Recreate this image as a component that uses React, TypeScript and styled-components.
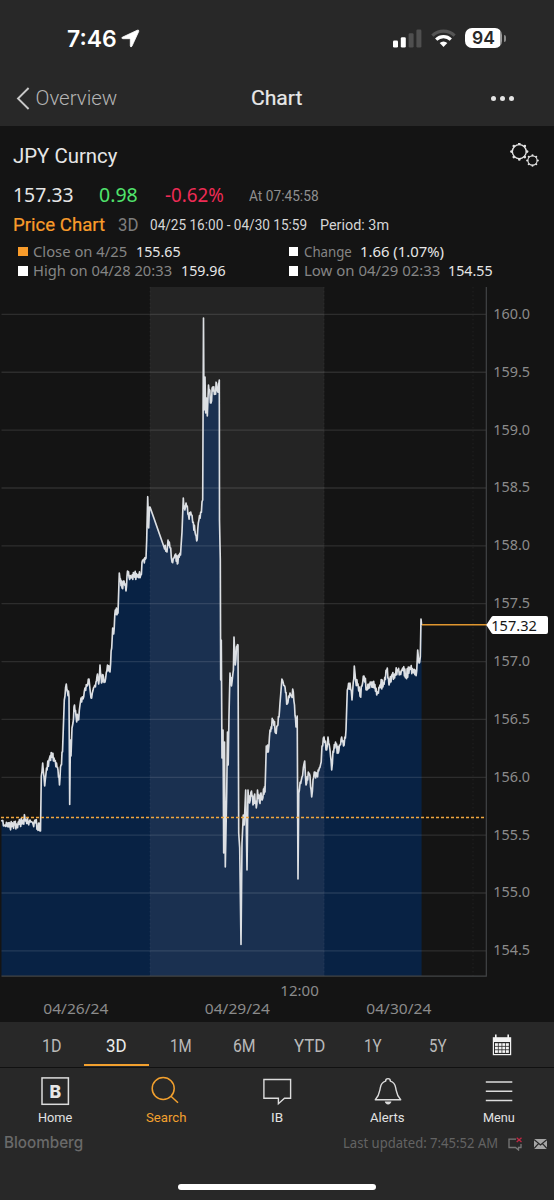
import React, { useLayoutEffect, useRef, useState } from "react";
import styled, { createGlobalStyle } from "styled-components";

const GlobalStyle = createGlobalStyle`
  * { box-sizing: border-box; }
  body { margin: 0; background: #282828; }
`;

const DIN = `Roboto, "Liberation Sans", sans-serif`;
const MONO = `"Noto Sans", "Open Sans", sans-serif`;
const UI = `Inter, "Liberation Sans", sans-serif`;

/* ---------- text that is condensed to a given width ---------- */

const FitBox = styled.span<{ $w: number; $size: number; $color: string; $weight: number; $font: string; $drop: number; $bolder: boolean }>`
  display: block;
  flex: none;
  width: ${(p) => p.$w}px;
  height: ${(p) => Math.round(p.$size)}px;
  line-height: ${(p) => Math.round(p.$size)}px;
  margin-top: ${(p) => p.$drop}px;
  font-family: ${(p) => p.$font};
  font-size: ${(p) => p.$size}px;
  font-weight: ${(p) => p.$weight};
  color: ${(p) => p.$color};
  -webkit-text-stroke: ${(p) => (p.$bolder ? 0.2 : 0)}px ${(p) => p.$color};
`;
const FitInner = styled.span`
  display: inline-block;
  white-space: pre;
  transform-origin: 0 50%;
`;

type FitProps = {
  w: number;
  size: number;
  color?: string;
  weight?: number;
  font?: string;
  drop?: number;
  bolder?: boolean;
  children: string;
};

function Fit({ w, size, color = "#e6e6e6", weight = 400, font = DIN, drop = 0, bolder = false, children }: FitProps) {
  const ref = useRef<HTMLSpanElement>(null);
  const [scale, setScale] = useState(1);
  useLayoutEffect(() => {
    if (ref.current && ref.current.offsetWidth) setScale(w / ref.current.offsetWidth);
  }, [w, children]);
  return (
    <FitBox $w={w} $size={size} $color={color} $weight={weight} $font={font} $drop={drop} $bolder={bolder}>
      <FitInner ref={ref} style={{ transform: `scaleX(${scale})` }}>
        {children}
      </FitInner>
    </FitBox>
  );
}

/* ---------- layout parts ---------- */

const Screen = styled.div`
  width: 554px;
  height: 1200px;
  display: flex;
  flex-direction: column;
  background: #282828;
  overflow: hidden;
`;
const StatusBar = styled.header`
  height: 74px;
  display: flex;
  align-items: center;
  justify-content: space-between;
  padding: 2px 48px 0 66.5px;
`;
const StatusGroup = styled.div<{ $gap: number }>`
  display: flex;
  align-items: center;
  gap: ${(p) => p.$gap}px;
`;
const Battery = styled.div`
  position: relative;
  width: 37px;
  height: 20px;
  border-radius: 7px;
  background: linear-gradient(90deg, #fff 94%, #9b9b9b 94%);
  display: flex;
  align-items: center;
  padding-left: 7px;
  margin-right: 4px;
  &::after {
    content: "";
    position: absolute;
    right: -4px;
    top: 7px;
    width: 2px;
    height: 7px;
    border-radius: 0 3px 3px 0;
    background: #8a8a8a;
  }
`;
const NavBar = styled.nav`
  height: 52px;
  display: grid;
  grid-template-columns: 235px auto 1fr;
  align-items: center;
  padding: 0 40px 4px 16px;
`;
const Back = styled.div`
  display: flex;
  align-items: center;
  gap: 5.5px;
`;
const More = styled.div`
  display: flex;
  justify-content: flex-end;
  gap: 4px;
`;
const Dot = styled.i`
  width: 5px;
  height: 5px;
  border-radius: 50%;
  background: #e4e4e4;
`;
const Body = styled.main`
  height: 896px;
  background: #141414;
  padding-top: 11px;
  display: flex;
  flex-direction: column;
`;
const TitleRow = styled.div`
  height: 37px;
  display: flex;
  align-items: center;
  justify-content: space-between;
  padding: 0 15px 0 13px;
`;
const PriceRow = styled.div`
  height: 41px;
  display: grid;
  grid-template-columns: 86px 65.5px 84px auto;
  align-items: center;
  padding-left: 13px;
`;
const RangeRow = styled.div`
  height: 19px;
  display: grid;
  grid-template-columns: 105px 32.5px 170px auto;
  justify-content: start;
  align-items: center;
  padding-left: 12.5px;
`;
const Legend = styled.div`
  display: grid;
  grid-template-columns: 270.5px auto;
  grid-auto-rows: 19.5px;
  padding: 0 0 0 18px;
  margin: 7.5px 0 6.5px;
`;
const LegendItem = styled.div`
  display: flex;
  align-items: center;
`;
const Swatch = styled.i<{ $color: string }>`
  width: 9.5px;
  height: 9.5px;
  margin-right: 5.5px;
  background: ${(p) => p.$color};
`;
const LegendGap = styled.i`
  width: 8.5px;
`;
const ChartSvg = styled.svg`
  display: block;
  flex: none;
`;
const RangeTabs = styled.div`
  height: 45px;
  display: grid;
  grid-template-columns: repeat(8, 1fr);
  padding: 0 20px;
`;
const RangeTab = styled.div<{ $active?: boolean }>`
  display: flex;
  align-items: center;
  justify-content: center;
  height: 44px;
  padding-top: ${(p) => (p.$active ? 6 : 4)}px;
  border-bottom: ${(p) => (p.$active ? "2px solid #f2a02e" : "0")};
`;
const TabBar = styled.div`
  height: 63px;
  border-top: 1px solid #111;
  display: grid;
  grid-template-columns: repeat(5, 1fr);
`;
const TabItem = styled.div`
  display: flex;
  flex-direction: column;
  align-items: center;
  padding-top: 7px;
`;
const TabIcon = styled.svg`
  width: 34px;
  height: 32px;
  margin-bottom: 3px;
`;
const Footer = styled.footer`
  height: 24px;
  display: flex;
  align-items: center;
  padding: 0 6px 0 4px;
`;
const FooterRight = styled.div`
  display: flex;
  align-items: center;
  margin-left: auto;
`;
const FooterIcon = styled.svg<{ $left: number }>`
  margin: 3px 0 0 ${(p) => p.$left}px;
`;
const HomeIndicator = styled.div`
  width: 198px;
  height: 6px;
  margin: 29.5px auto 0 178px;
  border-radius: 3px;
  background: #fff;
`;

/* ---------- chart ---------- */

const ticks = ["160.0", "159.5", "159.0", "158.5", "158.0", "157.5", "157.0", "156.5", "156.0", "155.5", "155.0", "154.5"];
const tickY = (i: number) => 314.4 + i * 57.86;

const anchors: [number, number][] = [
  [1.5, 820], [4, 826], [7, 824], [10, 827], [13, 824], [17, 826], [20, 822], [22, 824], [25, 818.5], [28, 823], [30, 820], [33, 824], [35, 820], [37.5, 827], [39, 823], [40.5, 831],
  [41.3, 776], [42.7, 763], [44.7, 786], [46.5, 768], [49, 760], [51.7, 753], [54, 758], [56.5, 763], [58, 770], [59.5, 785], [61, 765], [62.5, 752],
  [64.3, 700], [66.3, 684], [67.5, 692], [69, 697], [69.7, 804.5], [70.4, 740], [71, 756], [72, 728], [73, 723], [74.5, 705], [76, 716], [78, 720], [80, 705], [81, 698], [83, 699], [85, 688], [87, 686], [89, 679],
  [91, 698], [93.5, 688], [96, 682], [97.5, 674], [98.7, 684], [100, 665], [101.5, 683], [103.5, 677], [105, 682], [107.5, 665], [110, 672], [111.7, 648], [112.7, 628], [113.7, 634], [115.3, 610], [118, 613],
  [119.3, 573], [120.5, 579], [122, 588], [124, 581], [126, 591], [127.5, 571], [129, 577], [131, 578], [134, 574], [137, 577], [140.7, 575], [142.7, 560], [146, 558], [146.7, 540],
  [147.7, 496.7], [148.7, 528], [149.5, 507], [150, 507], [164, 547], [167, 552], [168, 540], [170.7, 548], [172, 562], [174, 558], [175.7, 554], [177.3, 564], [178.5, 555], [180.5, 555], [182, 532],
  [183.3, 498], [184.8, 510], [186, 503], [188.5, 515], [190.7, 512], [193.3, 522], [195, 532], [196.7, 541], [198.3, 523], [200.7, 512], [202.7, 500],
  [203.5, 318], [204, 410], [205, 377], [205.7, 413], [206.6, 398], [207.3, 416], [208.5, 385], [211, 403], [212.7, 387], [215, 393], [216.7, 384], [217.8, 392], [219.3, 380],
  [219.5, 520], [220.3, 560], [220.7, 680], [221.3, 640], [222, 758], [223, 730], [223.7, 853], [224.5, 742], [225.3, 867], [226.7, 793], [227.5, 732], [228.2, 765], [229, 715], [230, 673],
  [231.5, 686], [233.4, 670], [234, 637], [235.3, 665], [236.5, 647], [238, 645], [238.7, 833], [239.7, 848], [241, 944.5], [242, 843], [243.3, 815], [244.2, 825], [245.7, 790], [247, 870],
  [248, 790], [249.5, 803], [251.5, 791], [253, 805], [254.7, 794], [256.3, 808], [257.5, 790], [259.5, 802], [261, 793], [262.2, 800], [263.5, 789], [265, 792], [266.3, 746], [268.3, 752], [270, 730], [273.3, 720], [275.7, 733],
  [277.3, 726], [279, 717], [280.5, 697], [281.9, 679], [285, 687], [287.3, 704], [290, 693], [291.5, 696], [293.3, 692], [294.5, 705], [296, 727], [297.2, 716], [298, 879], [298.8, 793], [302, 777], [303.3, 768], [304.7, 761],
  [306, 785], [308.3, 772], [310, 776], [311.7, 797], [313, 780], [315, 772], [317, 775], [319.3, 768], [321.2, 762], [322, 746], [324, 737], [326.7, 750], [328, 737], [330, 750], [331.7, 770], [333, 751], [335.5, 742], [338.3, 753],
  [340, 745], [341.7, 737], [343.5, 746], [346, 730], [347.3, 690], [350, 683], [352, 700], [353.2, 683], [354.3, 666], [355.7, 681], [358, 684], [360, 696], [362, 686], [364, 676], [366.7, 690], [369, 684], [372.5, 682], [376.7, 695], [380, 685],
  [383.5, 683], [387.3, 668], [389, 685], [391.7, 675], [394, 675], [397.3, 670], [400, 672], [402.7, 668], [406, 675], [410, 669], [413, 671], [416.7, 671], [417.7, 650], [419, 663], [420.3, 657], [421, 619], [421.6, 625],
];

/* Adds tick noise between the sampled prices. */
function buildSeries(): [number, number][] {
  let seed = 11;
  const rand = () => {
    seed = (seed * 16807) % 2147483647;
    return seed / 2147483647 - 0.5;
  };
  const out: [number, number][] = [];
  anchors.forEach(([x, y], i) => {
    out.push([x, y]);
    const next = anchors[i + 1];
    if (!next) return;
    const [nx, ny] = next;
    const dx = nx - x;
    if (dx < 1.1 || dx > 8 || Math.abs(ny - y) > 24) return;
    const n = Math.round(dx / 0.6);
    for (let k = 1; k < n; k++) {
      const t = k / n;
      out.push([x + dx * t, y + (ny - y) * t + (k % 2 ? 1 : -1) * 2.2 + rand() * 5.5]);
    }
  });
  return out;
}

const series = buildSeries();
const linePath = "M" + series.map(([x, y]) => `${x.toFixed(1)} ${y.toFixed(1)}`).join("L");
const areaPath = `${linePath}V976H1.5Z`;

const AxisText = styled.text`
  font-family: ${MONO};
  font-size: 15.2px;
  fill: #8b8b8b;
`;

function PriceChart() {
  return (
    <ChartSvg width="554" height="735" viewBox="0 287 554 735">
      <rect x="150" y="287" width="174.3" height="689" fill="#242424" />
      <path d={areaPath} fill="#082244" />
      <clipPath id="band">
        <rect x="150" y="287" width="174.3" height="689" />
      </clipPath>
      <path d={areaPath} fill="#1a3050" clipPath="url(#band)" />
      {ticks.map((t, i) => (
        <line key={t} x1="1.5" x2="486" y1={tickY(i)} y2={tickY(i)} stroke="#fff" strokeOpacity="0.11" strokeWidth="1.3" />
      ))}
      {[150, 324, 473].map((x) => (
        <line key={x} x1={x} x2={x} y1="287" y2="976" stroke="#fff" strokeOpacity="0.06" strokeDasharray="1.5 2.5" />
      ))}
      <path d="M486.3 287V976.2H1.5" fill="none" stroke="#424446" strokeWidth="1.2" />
      <path d={linePath} fill="none" stroke="#dcdfe3" strokeWidth="1.65" strokeLinejoin="round" />
      <line x1="1" x2="484" y1="817.5" y2="817.5" stroke="#f0a63e" strokeWidth="1.5" strokeDasharray="3 2" />
      <line x1="422" x2="488" y1="624.7" y2="624.7" stroke="#df962f" strokeWidth="1.6" />
      {ticks.map((t, i) => (
        <AxisText key={t} x="493.2" y={Math.round(tickY(i) + 4.4)} textLength="36.8" lengthAdjust="spacingAndGlyphs">
          {t}
        </AxisText>
      ))}
      <path d="M486.3 625L491.5 617Q492 616 493.5 616H546Q548 616 548 618V632Q548 634 546 634H493.5Q492 634 491.5 633Z" fill="#fff" />
      <AxisText x="491.3" y="631" textLength="45.5" lengthAdjust="spacingAndGlyphs" style={{ fill: "#161616" }}>
        157.32
      </AxisText>
      <AxisText x="280.3" y="996" textLength="38.5" lengthAdjust="spacingAndGlyphs">12:00</AxisText>
      <AxisText x="43.3" y="1013.6" textLength="65" lengthAdjust="spacingAndGlyphs">04/26/24</AxisText>
      <AxisText x="204.8" y="1013.6" textLength="65" lengthAdjust="spacingAndGlyphs">04/29/24</AxisText>
      <AxisText x="366.3" y="1013.6" textLength="65" lengthAdjust="spacingAndGlyphs">04/30/24</AxisText>
    </ChartSvg>
  );
}

/* ---------- icons ---------- */

function Gear({ cx, cy, r, tooth, w }: { cx: number; cy: number; r: number; tooth: number; w: number }) {
  return (
    <g>
      <circle cx={cx} cy={cy} r={r} fill="none" stroke="#e2e2e2" strokeWidth={w} />
      {Array.from({ length: 8 }, (_, i) => {
        const a = (i * Math.PI) / 4;
        return <circle key={i} cx={cx + Math.cos(a) * tooth} cy={cy + Math.sin(a) * tooth} r={w * 0.95} fill="#e2e2e2" />;
      })}
    </g>
  );
}

function GearsIcon() {
  return (
    <svg width="30" height="26" viewBox="509.5 143 30 26">
      <Gear cx={519.8} cy={151.6} r={7} tooth={7.8} w={1.4} />
      <Gear cx={533} cy={160.5} r={4.6} tooth={5.3} w={1.1} />
    </svg>
  );
}

const CalendarSvg = styled.svg`
  margin-bottom: 3px;
`;

function CalendarIcon() {
  return (
    <CalendarSvg width="20" height="22" viewBox="0 0 20 22">
      <path d="M.8 3.2H19.2V21.2H.8Z" fill="#f2f2f2" />
      <path d="M3.8 .5V4M16.2 .5V4" stroke="#f2f2f2" strokeWidth="1.6" />
      <rect x="2" y="8" width="16" height="12" fill="#282828" />
      {[0, 1, 2].map((r) =>
        [0, 1, 2, 3].map((c) => <rect key={`${r}${c}`} x={3 + c * 3.65} y={9.2 + r * 3.5} width="2.9" height="2.7" fill="#f2f2f2" />)
      )}
    </CalendarSvg>
  );
}

const tabs = [
  {
    label: "Home", w: 34, color: "#e2e2e2",
    icon: (
      <>
        <rect x="4" y="2.9" width="26.4" height="26.4" fill="none" stroke="#dcdcdc" strokeWidth="1.5" />
        <text x="17.3" y="22.6" textAnchor="middle" fontFamily={UI} fontSize="17.5" fontWeight="800" fill="#e6e6e6">B</text>
      </>
    ),
  },
  {
    label: "Search", w: 40, color: "#f2a02e",
    icon: <path d="M25.2 13.5A11 11 0 1 1 3.2 13.5A11 11 0 1 1 25.2 13.5M21.7 21L29 27.8" fill="none" stroke="#f2a02e" strokeWidth="1.5" />,
  },
  {
    label: "IB", w: 12, color: "#e2e2e2",
    icon: <path d="M3.9 4.5H30.6V23.3H24.5L18.4 28.8V23.3H3.9Z" fill="none" stroke="#dcdcdc" strokeWidth="1.4" />,
  },
  {
    label: "Alerts", w: 35, color: "#e2e2e2",
    icon: (
      <>
        <path d="M4.3 24.7C8.5 20.3 8.3 17.5 9.3 12.8C10 9 11.7 7 14.6 6.2C14.6 2.8 19.4 2.8 19.4 6.2C22.3 7 24 9 24.7 12.8C25.7 17.5 25.5 20.3 29.7 24.7Z" fill="none" stroke="#dcdcdc" strokeWidth="1.4" strokeLinejoin="round" />
        <path d="M13.8 26.6H20.4Q19.8 29.4 17.1 29.4Q14.4 29.4 13.8 26.6Z" fill="#dcdcdc" />
      </>
    ),
  },
  {
    label: "Menu", w: 32, color: "#e2e2e2",
    icon: <path d="M3.8 7H30.3M3.8 16.3H30.3M3.8 25.6H30.3" stroke="#dcdcdc" strokeWidth="1.5" />,
  },
];

const ranges: [string, number][] = [["1D", 20], ["3D", 21], ["1M", 22], ["6M", 23], ["YTD", 31], ["1Y", 18], ["5Y", 18]];

const legend = [
  { color: "#f99c2b", label: "Close on 4/25", w: 94.5, value: "155.65", vw: 45 },
  { color: "#fff", label: "Change", w: 48, value: "1.66 (1.07%)", vw: 84 },
  { color: "#fff", label: "High on 04/28 20:33", w: 139.5, value: "159.96", vw: 45 },
  { color: "#fff", label: "Low on 04/29 02:33", w: 136, value: "154.55", vw: 45 },
];

export default function App() {
  return (
    <Screen>
      <GlobalStyle />
      <StatusBar>
        <StatusGroup $gap={4}>
          <Fit w={50} size={22.5} weight={600} font={UI} color="#fff">7:46</Fit>
          <svg width="19" height="19" viewBox="0 0 19 19">
            <path d="M1.2 8.3L16.3 1.2Q18.2.6 17.7 2.5L10.9 17.3Q9.8 18.8 9.3 17V10.3Q9.3 9.7 8.7 9.7H1.8Q0 9.3 1.2 8.3Z" fill="#fff" stroke="#fff" strokeWidth="0.8" />
          </svg>
        </StatusGroup>
        <StatusGroup $gap={9}>
          <svg width="29" height="19" viewBox="0 0 29 19">
            <rect x="0" y="11.5" width="5" height="7" rx="1.3" fill="#fff" />
            <rect x="7.8" y="8.3" width="5" height="10.2" rx="1.3" fill="#fff" />
            <rect x="15.6" y="4.3" width="5" height="14.2" rx="1.3" fill="#4f4f4f" />
            <rect x="23.4" y="0.5" width="5" height="18" rx="1.3" fill="#4f4f4f" />
          </svg>
          <svg width="25" height="19" viewBox="0 0 25 19">
            <path d="M1.4 6.6A16 16 0 0 1 23.6 6.6" fill="none" stroke="#555" strokeWidth="3.2" />
            <path d="M5.2 10.7A10.4 10.4 0 0 1 19.8 10.7" fill="none" stroke="#fff" strokeWidth="3.2" />
            <path d="M12.5 18L8.7 14.1A5.4 5.4 0 0 1 16.3 14.1Z" fill="#fff" />
          </svg>
          <Battery>
            <Fit w={23} size={17.5} weight={600} font={UI} color="#282828">94</Fit>
          </Battery>
        </StatusGroup>
      </StatusBar>
      <NavBar>
        <Back>
          <svg width="14" height="23" viewBox="0 0 14 23">
            <path d="M12.6 1L2 11.5L12.6 22" fill="none" stroke="#c8c8c8" strokeWidth="1.9" />
          </svg>
          <Fit w={82} size={20.5} color="#b4b4b4" weight={300} drop={1}>Overview</Fit>
        </Back>
        <Fit w={51.5} size={20.5} color="#e8e8e8" bolder drop={1}>Chart</Fit>
        <More>
          <Dot />
          <Dot />
          <Dot />
        </More>
      </NavBar>
      <Body>
        <TitleRow>
          <Fit w={104} size={20}>JPY Curncy</Fit>
          <GearsIcon />
        </TitleRow>
        <PriceRow>
          <Fit w={60.5} size={20.5} font={MONO}>157.33</Fit>
          <Fit w={39} size={20.5} color="#50e36c" font={MONO}>0.98</Fit>
          <Fit w={58.5} size={20.5} color="#ee2b55" font={MONO}>-0.62%</Fit>
          <Fit w={69.5} size={14.8} color="#8f8f8f" drop={4}>At 07:45:58</Fit>
        </PriceRow>
        <RangeRow>
          <Fit w={92} size={18} color="#f99c2b" bolder>Price Chart</Fit>
          <Fit w={20.5} size={18} color="#7d7d7d">3D</Fit>
          <Fit w={157.5} size={15} color="#d6d6d6" drop={1}>04/25 16:00 - 04/30 15:59</Fit>
          <Fit w={69} size={15} color="#d6d6d6" drop={1}>Period: 3m</Fit>
        </RangeRow>
        <Legend>
          {legend.map((l) => (
            <LegendItem key={l.label}>
              <Swatch $color={l.color} />
              <Fit w={l.w} size={15.2} font={MONO} color="#858585">{l.label}</Fit>
              <LegendGap />
              <Fit w={l.vw} size={15.2} font={MONO}>{l.value}</Fit>
            </LegendItem>
          ))}
        </Legend>
        <PriceChart />
      </Body>
      <RangeTabs>
        {ranges.map(([r, w]) => (
          <RangeTab key={r} $active={r === "3D"}>
            <Fit w={w} size={18.5} color={r === "3D" ? "#ececec" : "#b9b9b9"}>{r}</Fit>
          </RangeTab>
        ))}
        <RangeTab>
          <CalendarIcon />
        </RangeTab>
      </RangeTabs>
      <TabBar>
        {tabs.map((t) => (
          <TabItem key={t.label}>
            <TabIcon viewBox="0 0 34 32">{t.icon}</TabIcon>
            <Fit w={t.w} size={13.5} color={t.color}>{t.label}</Fit>
          </TabItem>
        ))}
      </TabBar>
      <Footer>
        <Fit w={79} size={16} weight={500} font={UI} color="#6a6a6a">Bloomberg</Fit>
        <FooterRight>
          <Fit w={155} size={14} font={MONO} color="#636363" drop={1}>Last updated: 7:45:52 AM</Fit>
          <FooterIcon $left={10.5} width="15" height="14" viewBox="0 0 15 14">
            <path d="M8 2.2H1V10.5H7.5L10.5 13V10.5H13V7" fill="none" stroke="#777" strokeWidth="1.3" />
            <path d="M8.7 .8L13.5 5M13.5 .8L8.7 5" stroke="#c02844" strokeWidth="1.3" />
          </FooterIcon>
          <FooterIcon $left={10} width="15" height="12" viewBox="0 0 15 12">
            <rect x="1" y="1" width="13" height="10" fill="#a5a5a5" />
            <path d="M1 1.5L7.5 7L14 1.5M1 10.5L5.5 5.6M14 10.5L9.5 5.6" fill="none" stroke="#282828" strokeWidth="1.2" />
          </FooterIcon>
        </FooterRight>
      </Footer>
      <HomeIndicator />
    </Screen>
  );
}
